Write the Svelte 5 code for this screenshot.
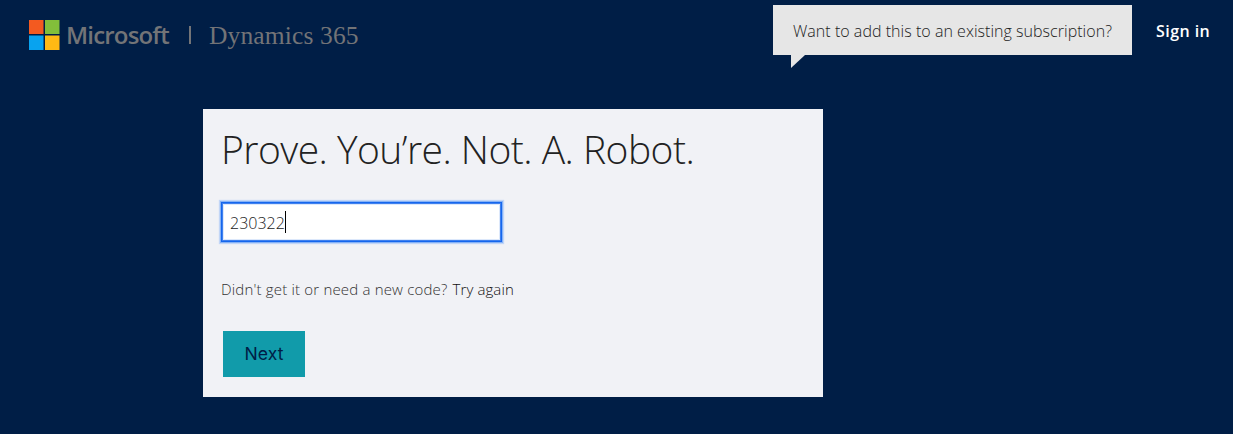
<script>
  let code = $state('230322');
</script>

<div class="page">
  <header>
    <div class="brand">
      <svg width="31" height="30" viewBox="0 0 31 30" aria-hidden="true">
        <rect width="14.5" height="14" fill="#f35a20" />
        <rect x="16" width="14.5" height="14" fill="#82bf3a" />
        <rect y="15.5" width="14.5" height="14.5" fill="#08a3ef" />
        <rect x="16" y="15.5" width="14.5" height="14.5" fill="#ffb914" />
      </svg>
      <span class="name">Microsoft</span>
      <span class="bar"></span>
      <span class="product">Dynamics 365</span>
    </div>
    <div class="account">
      <div class="callout"><span>Want to add this to an existing subscription?</span></div>
      <a class="signin" href="#signin">Sign in</a>
    </div>
  </header>
  <main>
    <h1>Prove. You’re. Not. A. Robot.</h1>
    <div class="field"><span>{code}</span><i class="caret"></i></div>
    <p><span class="hint">Didn't get it or need a new code?</span><a href="#retry">Try again</a></p>
    <button type="button"><span>Next</span></button>
  </main>
</div>

<style>
  :global(body) { background: #001e46; }
  .page {
    height: 434px;
    overflow: hidden;
    background: #001e46;
    font-family: "Open Sans", "Noto Sans", sans-serif;
    font-weight: 300;
  }
  header {
    height: 109px;
    display: flex;
    justify-content: space-between;
    align-items: flex-start;
    white-space: nowrap;
  }
  a { text-decoration: none; color: inherit; }
  .brand {
    display: flex;
    align-items: center;
    height: 30px;
    padding: 20px 0 0 29px;
    color: #737477;
  }
  .name {
    width: 103px;
    margin-left: 6px;
    padding-bottom: 2px;
    font-size: 24px;
    font-weight: 600;
    letter-spacing: -0.82px;
  }
  .bar { width: 2px; height: 18px; margin: 0 18px 0 20px; background: #737477; }
  .product {
    padding-top: 1px;
    font: 25.5px/30px "Liberation Serif", serif;
    letter-spacing: 0.14px;
  }
  .account { display: flex; padding-top: 5px; }
  .callout {
    position: relative;
    box-sizing: border-box;
    width: 359px;
    height: 50px;
    padding-left: 20px;
    line-height: 52px;
    background: #e6e6e6;
    color: #222;
    font-size: 16px;
    letter-spacing: 0.035px;
  }
  .callout::after {
    content: "";
    position: absolute;
    left: 18px;
    top: 50px;
    width: 14px;
    height: 13px;
    background: #e6e6e6;
    clip-path: polygon(0 0, 100% 0, 0 100%);
  }
  .signin {
    width: 77px;
    margin-left: 24px;
    line-height: 52px;
    font-size: 16px;
    font-weight: 600;
    letter-spacing: 0.45px;
    color: #fff;
  }
  main {
    box-sizing: border-box;
    width: 620px;
    height: 288px;
    margin-left: 203px;
    padding: 16px 18px 0;
    background: #f1f2f6;
  }
  h1 {
    margin: 0;
    font-size: 39px;
    line-height: 48px;
    font-weight: 300;
    letter-spacing: -0.53px;
    color: #222;
    white-space: nowrap;
  }
  .field {
    display: flex;
    align-items: center;
    box-sizing: border-box;
    width: 281px;
    height: 40px;
    margin-top: 29px;
    padding: 0 8px;
    border: 1px solid #1566ed;
    background: #fff;
    box-shadow: 0 0 0 1px #86b2f6, 0 0 1px 2px #c2d6f7, inset 0 0 0 1px #3f80ee, inset 0 0 0 2px #dce8fb;
    color: #222;
    font-size: 16px;
  }
  .field span { padding-top: 1px; }
  .caret { width: 1px; height: 22px; background: #000; }
  p {
    display: flex;
    gap: 5px;
    margin: 36px 0 0;
    line-height: 22px;
    font-size: 15px;
    color: #333;
    white-space: nowrap;
  }
  .hint { letter-spacing: 0.18px; }
  p a { color: #111; letter-spacing: 0.1px; }
  button {
    display: block;
    width: 82px;
    height: 46px;
    margin: 31px 0 0 2px;
    padding: 0;
    border: 0;
    background: #119baa;
    color: #001e46;
    font: 17.6px/46px Inter, sans-serif;
  }
</style>
